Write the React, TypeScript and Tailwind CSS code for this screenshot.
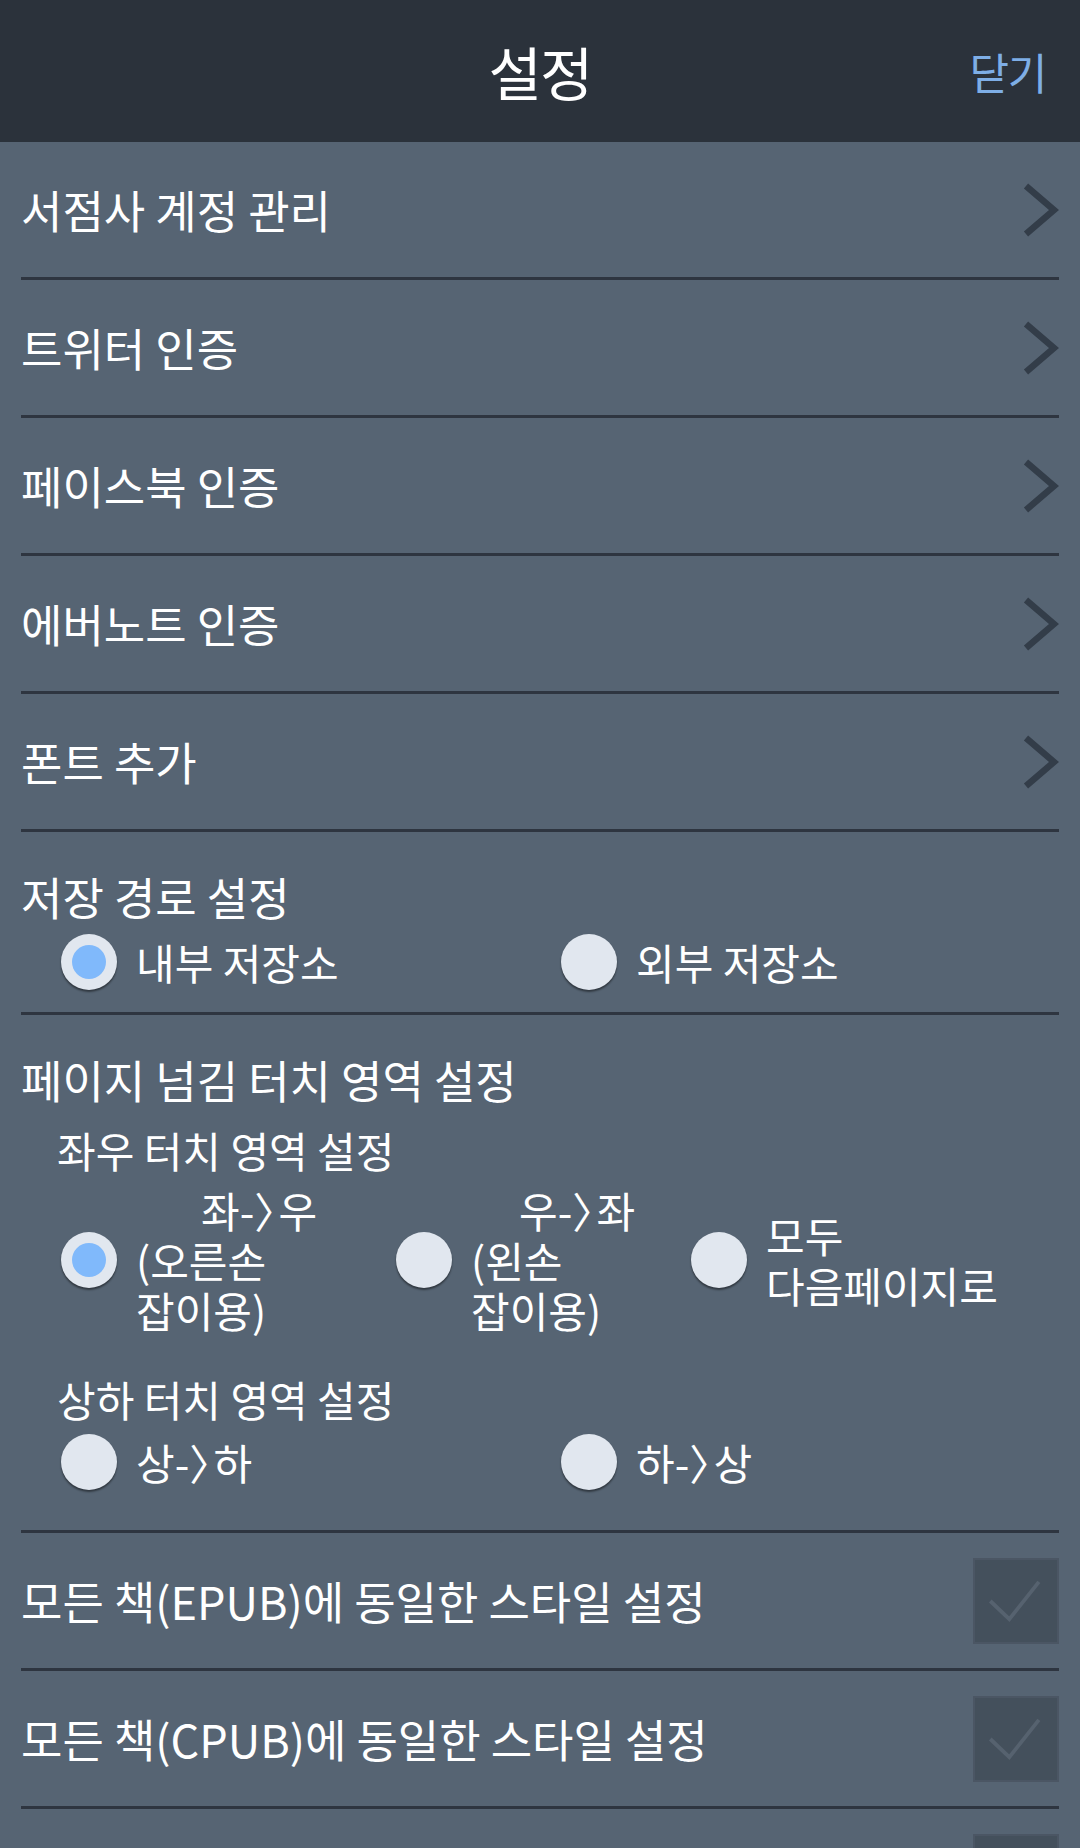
import React from "react";

const NAV_ITEMS = ["서점사 계정 관리", "트위터 인증", "페이스북 인증", "에버노트 인증", "폰트 추가"];

const CHECK_ITEMS = [
  "모든 책(EPUB)에 동일한 스타일 설정",
  "모든 책(CPUB)에 동일한 스타일 설정",
  "볼륨 키로 페이지 넘기기",
];

function Chevron() {
  return (
    <svg width="36" height="54" viewBox="0 0 36 54" className="shrink-0">
      <polyline points="3,3 31,27 3,51" fill="none" stroke="#333d49" strokeWidth="6.5" />
    </svg>
  );
}

// narrow arrow like "-〉" in the reference
function Arrow() {
  return (
    <>
      -<span className="tracking-[-0.42em]">〉</span>
    </>
  );
}

function Radio({ checked = false }: { checked?: boolean }) {
  return (
    <span className="flex h-[56px] w-[56px] shrink-0 items-center justify-center rounded-full bg-[#e1e7ef] shadow-[0_2px_2px_rgba(0,0,0,0.45)]">
      {checked && <span className="h-[34px] w-[34px] rounded-full bg-[#80b9fb]" />}
    </span>
  );
}

function RadioOption({
  checked,
  className,
  children,
}: {
  checked?: boolean;
  className?: string;
  children: React.ReactNode;
}) {
  return (
    <div className={`flex items-center gap-[19px] ${className ?? ""}`}>
      <Radio checked={checked} />
      <div className="text-[42px] leading-[50px] text-white">{children}</div>
    </div>
  );
}

function CheckBox() {
  return (
    <span className="flex h-[86px] w-[86px] shrink-0 items-center justify-center border-2 border-[#4b5664] bg-[#44505c]">
      <svg width="86" height="86" viewBox="0 0 86 86">
        <polyline points="16,43 36,62 67,23" fill="none" stroke="#56626f" strokeWidth="4" />
      </svg>
    </span>
  );
}

export default function App() {
  return (
    <div className="min-h-[1848px] bg-[#566473] font-['Noto_Sans_CJK_KR',sans-serif] text-white">
      <header className="relative flex h-[142px] items-center justify-center bg-[#2b323b]">
        <h1 className="text-[58px] leading-none tracking-[-0.03em]">설정</h1>
        <button className="absolute right-[34px] top-1/2 -translate-y-1/2 text-[43px] leading-none tracking-[-0.03em] text-[#7eaee6]">
          닫기
        </button>
      </header>

      <div className="pl-[21px] pr-[21px]">
        {NAV_ITEMS.map((label) => (
          <div
            key={label}
            className="flex h-[138px] items-center justify-between border-b-[3px] border-[#2e3540]"
          >
            <span className="text-[45px] leading-[52px]">{label}</span>
            <Chevron />
          </div>
        ))}

        <section className="border-b-[3px] border-[#2e3540] pb-[18px] pt-[39px]">
          <div className="text-[45px] leading-[52px]">저장 경로 설정</div>
          <div className="mt-[7px] flex h-[64px] items-center pl-[40px]">
            <RadioOption checked className="w-[500px]">
              내부 저장소
            </RadioOption>
            <RadioOption>외부 저장소</RadioOption>
          </div>
        </section>

        <section className="border-b-[3px] border-[#2e3540] pb-[36px] pt-[39px]">
          <div className="text-[45px] leading-[52px]">페이지 넘김 터치 영역 설정</div>
          <div className="mt-[21px] pl-[36px] text-[42px] leading-[46px]">좌우 터치 영역 설정</div>
          <div className="mt-[12px] flex items-center pl-[40px]">
            <RadioOption checked className="w-[335px]">
              <span className="block pl-[65px]">
                좌<Arrow />우
              </span>
              <span className="block">(오른손</span>
              <span className="block">잡이용)</span>
            </RadioOption>
            <RadioOption className="w-[295px]">
              <span className="block pl-[48px]">
                우<Arrow />좌
              </span>
              <span className="block">(왼손</span>
              <span className="block">잡이용)</span>
            </RadioOption>
            <RadioOption>
              <span className="block">모두</span>
              <span className="block">다음페이지로</span>
            </RadioOption>
          </div>
          <div className="mt-[41px] pl-[36px] text-[42px] leading-[46px]">상하 터치 영역 설정</div>
          <div className="mt-[8px] flex h-[64px] items-center pl-[40px]">
            <RadioOption className="w-[500px]">
              상<Arrow />하
            </RadioOption>
            <RadioOption>
              하<Arrow />상
            </RadioOption>
          </div>
        </section>

        {CHECK_ITEMS.map((label) => (
          <div
            key={label}
            className="flex h-[138px] items-center justify-between border-b-[3px] border-[#2e3540]"
          >
            <span className="text-[45px] leading-[52px]">{label}</span>
            <CheckBox />
          </div>
        ))}
      </div>
    </div>
  );
}
